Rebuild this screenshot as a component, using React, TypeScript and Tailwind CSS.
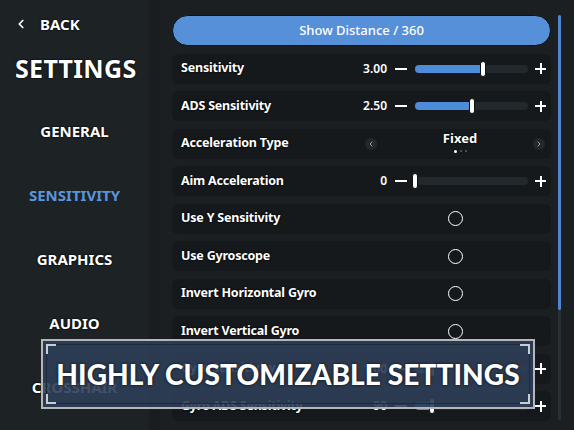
import { ChevronLeft, ChevronRight } from 'lucide-react';

type Row =
  | { kind: 'slider'; label: string; value: string; pct: number }
  | { kind: 'select'; label: string; value: string }
  | { kind: 'toggle'; label: string };

const rows: Row[] = [
  { kind: 'slider', label: 'Sensitivity', value: '3.00', pct: 60 },
  { kind: 'slider', label: 'ADS Sensitivity', value: '2.50', pct: 50 },
  { kind: 'select', label: 'Acceleration Type', value: 'Fixed' },
  { kind: 'slider', label: 'Aim Acceleration', value: '0', pct: 0 },
  { kind: 'toggle', label: 'Use Y Sensitivity' },
  { kind: 'toggle', label: 'Use Gyroscope' },
  { kind: 'toggle', label: 'Invert Horizontal Gyro' },
  { kind: 'toggle', label: 'Invert Vertical Gyro' },
  { kind: 'slider', label: 'Gyro Sensitivity', value: '1.00', pct: 15 },
  { kind: 'slider', label: 'Gyro ADS Sensitivity', value: '90', pct: 15 },
];

const menu = ['GENERAL', 'SENSITIVITY', 'GRAPHICS', 'AUDIO', 'CROSSHAIR'];

const outline = '[text-shadow:0_0_2px_#000,0_0_1px_#000]';

function Slider({ value, pct }: { value: string; pct: number }) {
  return (
    <div className="flex items-center w-[196px]">
      <span className="w-[32px] text-right text-[12px] font-semibold text-white">{value}</span>
      <span className="ml-[8px] w-[12px] h-[2px] bg-white" />
      <div className="ml-[8px] w-[113px] h-[8px] rounded-full bg-[#23282c] relative">
        <div className="h-full rounded-full bg-[#4e8bd8]" style={{ width: `${pct}%` }} />
        <div
          className="absolute top-[-4px] w-[6px] h-[16px] rounded-[3px] bg-white border border-[#111]"
          style={{ left: `calc(${pct}% - 3px)` }}
        />
      </div>
      <span className="ml-[7px] w-[11px] h-[11px] relative">
        <span className="absolute left-0 top-[4.5px] w-[11px] h-[2px] bg-white" />
        <span className="absolute left-[4.5px] top-0 w-[2px] h-[11px] bg-white" />
      </span>
    </div>
  );
}

function Select({ value }: { value: string }) {
  return (
    <div className="flex items-center w-[196px] pl-[10px] pr-[6px]">
      <span className="w-[12px] h-[12px] rounded-full bg-[#23282c] flex items-center justify-center">
        <ChevronLeft className="w-[8px] h-[8px] text-[#9aa0a6]" strokeWidth={3} />
      </span>
      <div className="flex-1 flex flex-col items-center pl-[10px]">
        <span className={`text-[13px] font-bold text-white leading-none -mt-[3px] ${outline}`}>{value}</span>
        <div className="flex gap-[3px] mt-[5px] items-center">
          <span className="w-[3px] h-[3px] rounded-full bg-white" />
          <span className="w-[2px] h-[2px] rounded-full bg-[#5a5f64]" />
          <span className="w-[2px] h-[2px] rounded-full bg-[#5a5f64]" />
        </div>
      </div>
      <span className="w-[12px] h-[12px] rounded-full bg-[#23282c] flex items-center justify-center">
        <ChevronRight className="w-[8px] h-[8px] text-[#9aa0a6]" strokeWidth={3} />
      </span>
    </div>
  );
}

export default function App() {
  return (
    <div className="relative w-[574px] h-[430px] overflow-hidden flex bg-[#1b1f22] font-['Noto_Sans',sans-serif]">
      {/* Sidebar */}
      <div className="w-[149px] shrink-0 bg-[#1d2225] flex flex-col">
        <div className={`flex items-center gap-[12px] pl-[14px] pt-[13px] text-white ${outline}`}>
          <ChevronLeft className="w-[14px] h-[14px]" strokeWidth={3} />
          <span className="text-[15px] font-bold">BACK</span>
        </div>
        <h1 className={`pl-[15px] mt-[20px] text-[25px] font-bold text-white tracking-[0.3px] leading-none ${outline}`}>
          SETTINGS
        </h1>
        <div className="flex flex-col items-center mt-[39px] gap-[42px]">
          {menu.map((m) => (
            <span
              key={m}
              className={`text-[15px] font-bold leading-[22px] ${
                m === 'SENSITIVITY' ? 'text-[#5b95dc]' : `text-white ${outline}`
              }`}
            >
              {m}
            </span>
          ))}
        </div>
      </div>
      <div className="w-[11px] shrink-0 bg-[#191d20]" />

      {/* Main */}
      <div className="flex-1 flex pl-[12px] pt-[15px]">
        <div className="w-[379px] flex flex-col gap-[7px]">
          <div className="h-[31px] rounded-full bg-[#5590d9] border border-[#0e1115] flex items-center justify-center text-white text-[13px] font-medium">
            Show Distance / 360
          </div>
          {rows.map((r) => (
            <div key={r.label} className="h-[30px] rounded-[6px] bg-[#15191c] flex items-center pl-[9px] mt-[0.5px]">
              <span className={`flex-1 text-[12.5px] font-bold text-white tracking-[-0.2px] ${outline}`}>{r.label}</span>
              {r.kind === 'slider' && <Slider value={r.value} pct={r.pct} />}
              {r.kind === 'select' && <Select value={r.value} />}
              {r.kind === 'toggle' && (
                <div className="w-[196px] flex justify-center pl-[4px]">
                  <span className="w-[15px] h-[15px] rounded-full border-[1.5px] border-white" />
                </div>
              )}
            </div>
          ))}
        </div>
        <div className="ml-[7px] w-[3px] h-[405px] rounded-full bg-[#2a2f34]">
          <div className="w-full h-[295px] rounded-full bg-[#4d86cf]" />
        </div>
      </div>

      {/* Banner */}
      <div className="absolute left-[41px] top-[339px] w-[494px] h-[70px] border-2 border-[#b3b7bd] bg-[#2d3e56]/[0.9] p-[3px]">
        <div className="relative w-full h-full border border-[#1c2a3e] flex items-center justify-center">
          <span className="absolute left-[-1px] top-[-1px] w-[10px] h-[10px] border-l-2 border-t-2 border-[#c9ccd0]" />
          <span className="absolute right-[-1px] top-[-1px] w-[10px] h-[10px] border-r-2 border-t-2 border-[#c9ccd0]" />
          <span className="absolute left-[-1px] bottom-[-1px] w-[10px] h-[10px] border-l-2 border-b-2 border-[#c9ccd0]" />
          <span className="absolute right-[-1px] bottom-[-1px] w-[10px] h-[10px] border-r-2 border-b-2 border-[#c9ccd0]" />
          <span className="font-['Lato',sans-serif] font-black text-white text-[28px] tracking-[0.1px] [text-shadow:0_0_3px_#0b1422,0_0_1px_#0b1422]">
            HIGHLY CUSTOMIZABLE SETTINGS
          </span>
        </div>
      </div>
    </div>
  );
}
